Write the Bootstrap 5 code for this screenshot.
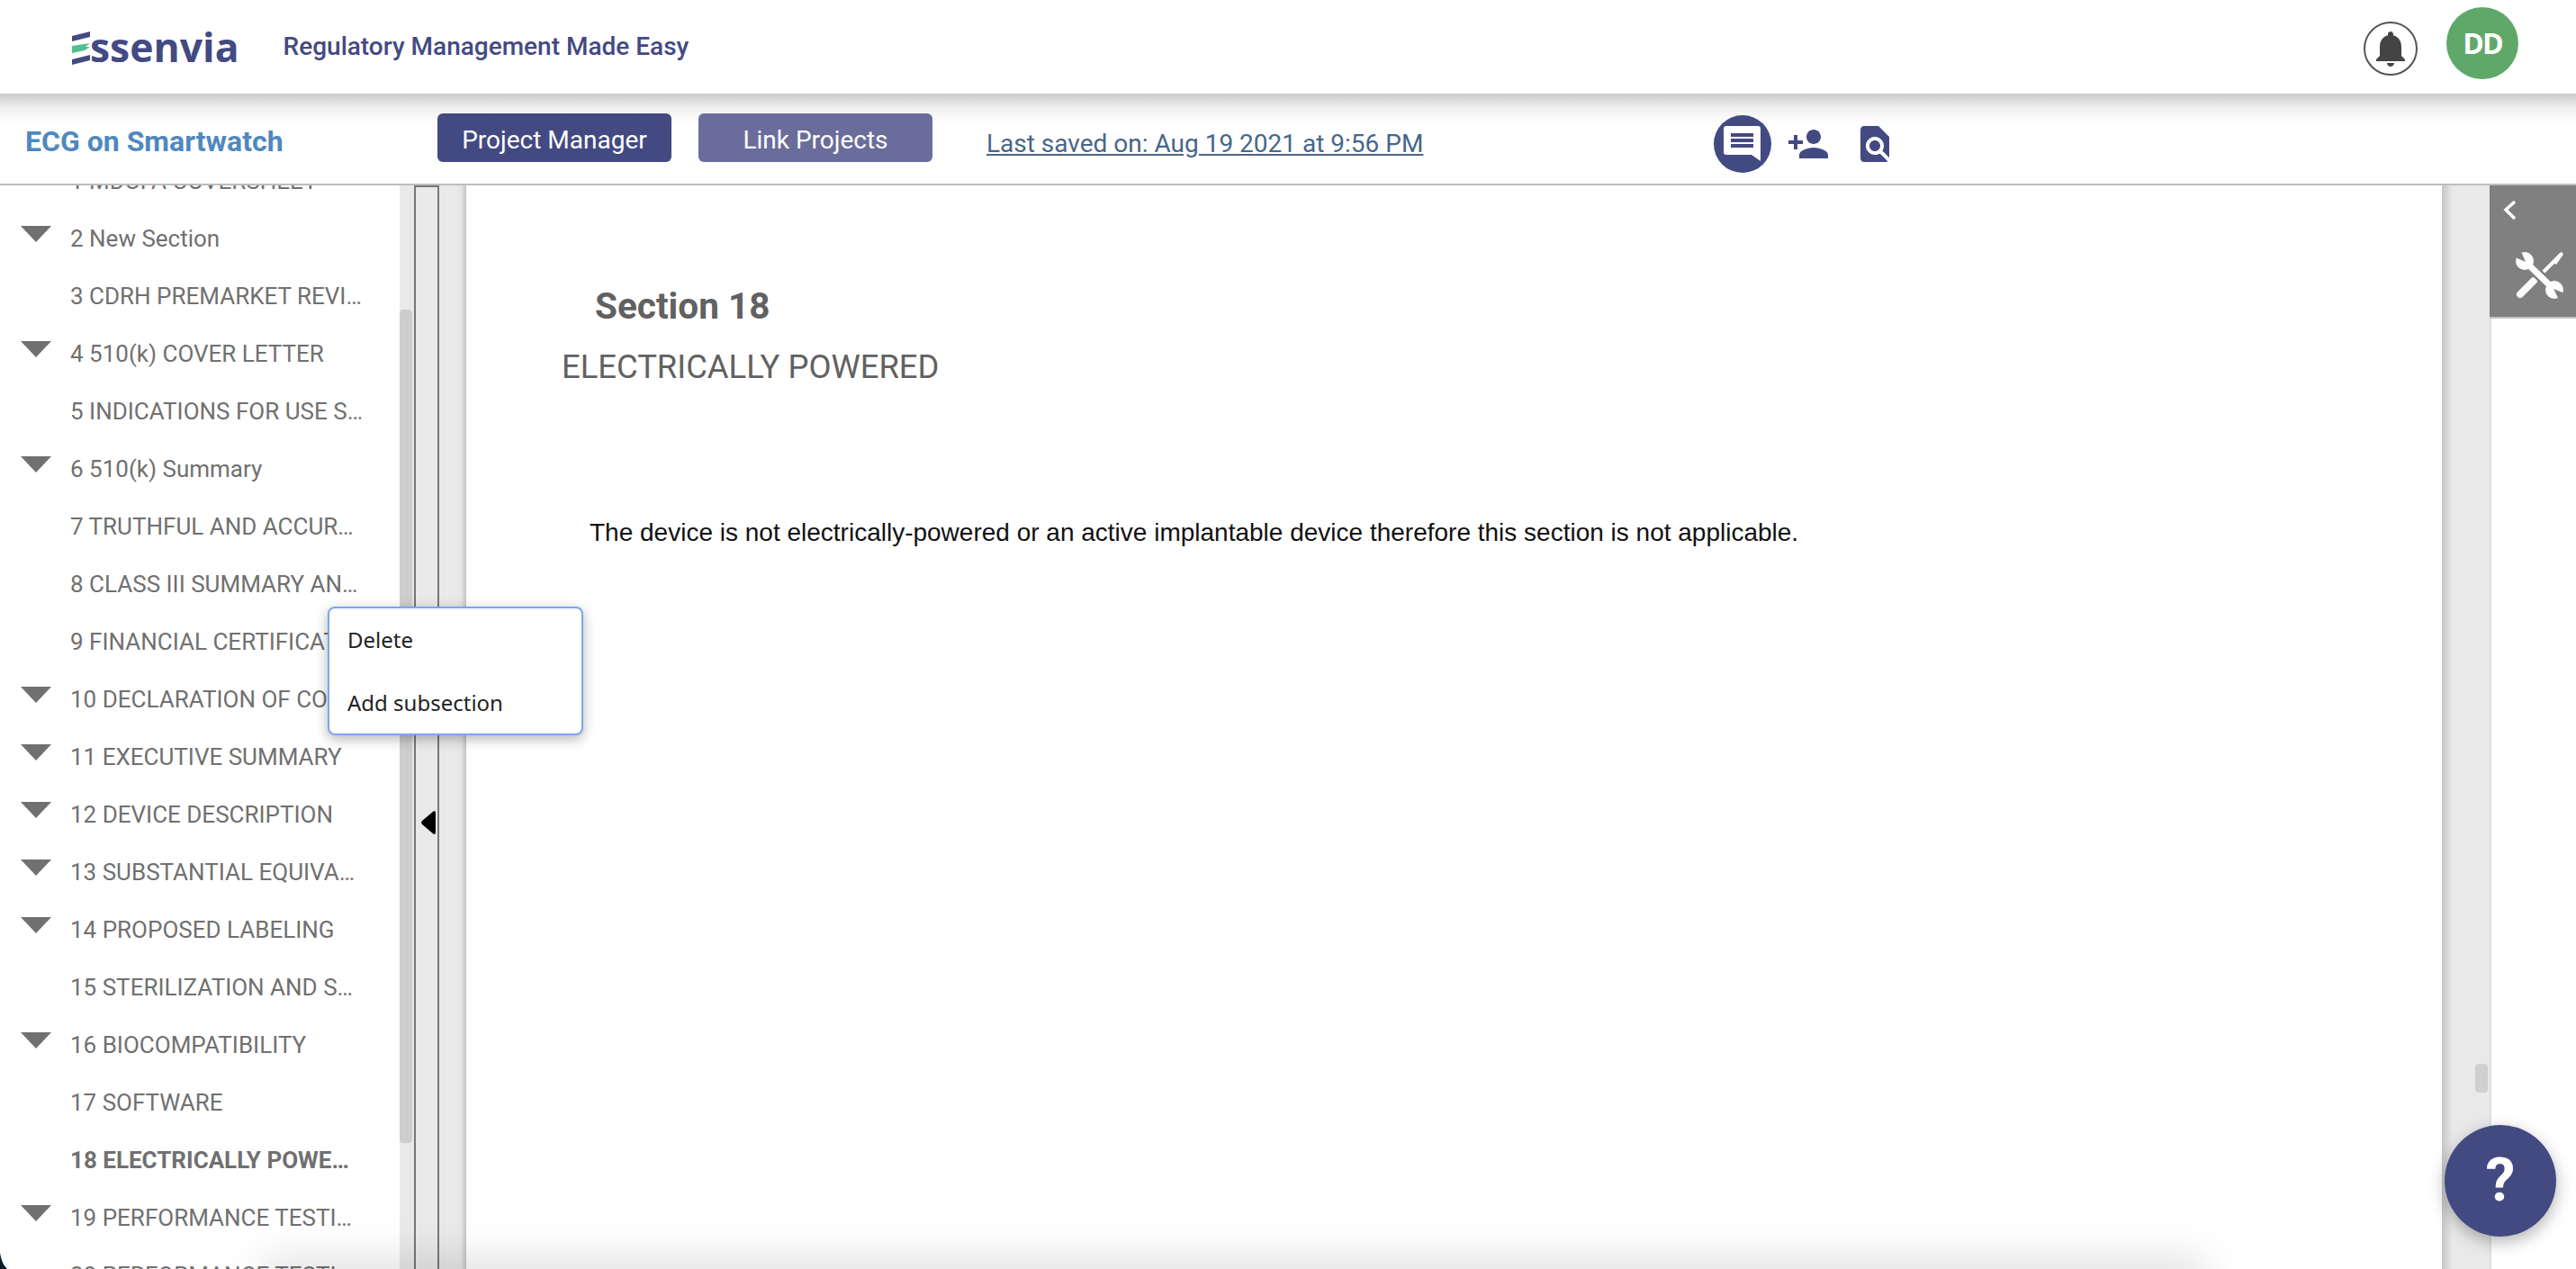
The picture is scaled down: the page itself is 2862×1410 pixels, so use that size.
<!DOCTYPE html>
<html lang="en">
<head>
  <meta charset="UTF-8">
  <meta name="viewport" content="width=device-width, initial-scale=1.0">
  <title>Essenvia</title>
  <link rel="stylesheet" href="https://cdn.jsdelivr.net/npm/bootstrap@5.3.0/dist/css/bootstrap.min.css">
  <style>
    html, body { height: 100%; overflow: hidden; }
    body { font-family: Roboto, sans-serif; background: #fff; }
    .app-shell { height: 1410px; }

    /* top header */
    .top-head { height: 104px; padding: 0 64px 0 80px; }
    .brand-mark { width: 21px; height: 37px; margin-top: 3px; }
    .brand-name { font-family: "Open Sans", sans-serif; font-weight: 700; font-size: 44.5px; line-height: 1; color: #434a82; margin-left: -1px; }
    .tag-line { font-weight: 500; font-size: 28px; color: #434a82; margin-left: 49px; }
    .bell-ring { width: 60px; height: 60px; border: 2px solid #555; margin-top: 4px; }
    .user-dot { width: 80px; height: 80px; background: #60a869; color: #fff; font-family: "Open Sans", sans-serif; font-weight: 700; font-size: 32px; letter-spacing: -2px; margin-left: 32px; margin-top: -8px; }

    /* project bar */
    .sub-bar { height: 102px; border-bottom: 2px solid #bdbdbd; background: linear-gradient(#cacaca, #f1f1f1 16px, #fff 34px); padding-left: 28px; }
    .proj-title { width: 458px; font-weight: 700; font-size: 32px; color: #4f88be; margin-top: 6px; }
    .bar-btn { width: 260px; height: 54px; padding: 0; border: 0; border-radius: 6px; color: #fff; font-size: 28px; line-height: 60px; margin-top: -2px; }
    .bar-btn.is-main, .bar-btn.is-main:hover { background: #434a82; color: #fff; }
    .bar-btn.is-soft, .bar-btn.is-soft:hover { background: #6a6d9b; color: #fff; margin-left: 30px; }
    .saved-link { font-size: 28px; color: #48668a; margin-left: 60px; width: 808px; margin-top: 12px; }
    .chat-dot { width: 64px; height: 64px; margin-top: 12px; }
    .bar-icon { width: 48px; height: 48px; fill: #434a82; margin-top: 12px; }

    /* section tree */
    .work-area { height: 1204px; }
    .tree-pane { width: 444px; overflow: hidden; }
    .tree-list { margin-top: -37px; }
    .tree-row { height: 64px; font-size: 26px; color: #707070; }
    .tree-row.is-active { font-weight: 700; }
    .caret-slot { width: 78px; padding-left: 23px; flex: none; margin-top: -10px; }
    .caret-slot svg { width: 34px; height: 18px; display: block; fill: #707070; }
    .tree-track { width: 16px; background: #e9e9e9; padding-top: 138px; }
    .tree-thumb { width: 14px; height: 926px; background: #cdcdcd; border-radius: 4px; }
    .split-box { width: 28px; background: #e9e9e9; border: 2px solid #777; border-bottom-width: 0; padding: 692px 0 0 6px; }
    .split-box svg { width: 16px; height: 28px; display: block; }
    .split-gap { width: 30px; background: linear-gradient(90deg, #e9e9e9 60%, #e6e6e6 80%, #c4c4c4); }

    /* document */
    .doc-page { padding: 111px 0 0 106px; color: #616161; }
    .doc-head { font-size: 40.5px; font-weight: 700; line-height: 47px; margin: 0 0 0 37px; }
    .doc-sub { font-size: 36.4px; font-weight: 400; line-height: 44px; margin: 22px 0 0; }
    .doc-text { font-family: "Liberation Sans", Arial, sans-serif; font-size: 28px; line-height: 40px; color: #111; margin: 142px 0 0 31px; }
    .doc-rail { width: 53px; background: linear-gradient(90deg, #c6c6c6, #e9e9e9 12px); padding: 976px 2px 0 37px; }
    .doc-thumb { height: 32px; background: #d0d0d0; border-radius: 4px; }
    .tool-pane { width: 96px; border-left: 2px solid #e0e0e0; }
    .tool-tab { height: 148px; margin-left: -2px; background: #808080; border-bottom: 2px solid #c4c4c4; padding: 16px 0 0 14px; }
    .tool-tab svg { display: block; }

    /* things that sit on top */
    .row-menu { left: 364px; top: 674px; width: 284px; height: 143px; background: #fff; border: 2px solid #7ba6ef; border-radius: 8px; box-shadow: 0 4px 14px rgba(0,0,0,.3); font-family: "Noto Sans", sans-serif; font-size: 24px; color: #222; padding: 0 20px; }
    .row-menu div { height: 70px; line-height: 70px; }
    .help-btn { right: 22px; top: 1250px; width: 124px; height: 124px; background: #434a82; color: #fff; border: 0; font-size: 66px; font-weight: 700; line-height: 1; box-shadow: 0 6px 18px rgba(0,0,0,.3); }
    .foot-shade { left: 300px; right: 420px; bottom: -16px; height: 16px; box-shadow: 0 0 46px 8px rgba(0,0,0,.16); }
    .win-corner { left: 0; bottom: 0; width: 8px; height: 18px; fill: #0d1b26; }
  </style>
</head>
<body>
  <div class="app-shell position-relative overflow-hidden">

    <header class="top-head d-flex align-items-center">
      <svg class="brand-mark" viewBox="0 0 21 37">
        <polygon points="0,5 20,0 20,6 0,11" fill="#434a82"/>
        <polygon points="0,16 20,13 15,17 20,17 14,21 0,24" fill="#4fc08f"/>
        <polygon points="0,31 20,26 20,32 0,37" fill="#434a82"/>
      </svg>
      <span class="brand-name">ssenvia</span>
      <span class="tag-line">Regulatory Management Made Easy</span>
      <div class="d-flex align-items-center ms-auto">
        <div class="bell-ring rounded-circle d-flex align-items-center justify-content-center">
          <svg width="48" height="48" viewBox="0 0 24 24" fill="#444"><path d="M12 22c1.1 0 2-.9 2-2h-4c0 1.1.89 2 2 2zm6-6v-5c0-3.07-1.64-5.64-4.5-6.32V4c0-.83-.67-1.5-1.5-1.5s-1.5.67-1.5 1.5v.68C7.63 5.36 6 7.92 6 11v5l-2 2v1h16v-1l-2-2z"/></svg>
        </div>
        <div class="user-dot rounded-circle d-flex align-items-center justify-content-center">DD</div>
      </div>
    </header>

    <div class="sub-bar d-flex align-items-center">
      <div class="proj-title">ECG on Smartwatch</div>
      <button class="btn bar-btn is-main" type="button">Project Manager</button>
      <button class="btn bar-btn is-soft" type="button">Link Projects</button>
      <a class="saved-link" href="#">Last saved on: Aug 19 2021 at 9:56 PM</a>
      <svg class="chat-dot" viewBox="0 0 64 64">
        <circle cx="32" cy="32" r="32" fill="#434a82"/>
        <path d="M14 12h35a3 3 0 0 1 3 3v36l-10-7H14a3 3 0 0 1-3-3V15a3 3 0 0 1 3-3z" fill="#fff"/>
        <path d="M19 20h25v4H19zM19 26h25v4H19zM19 32h25v4H19z" fill="#434a82"/>
      </svg>
      <svg class="bar-icon" style="margin-left:17px" viewBox="0 0 24 24"><path d="M15 12c2.21 0 4-1.79 4-4s-1.79-4-4-4-4 1.79-4 4 1.79 4 4 4zm-9-2V7H4v3H1v2h3v3h2v-3h3v-2H6zm9 4c-2.67 0-8 1.34-8 4v2h16v-2c0-2.66-5.33-4-8-4z"/></svg>
      <svg class="bar-icon" style="margin-left:26px" viewBox="0 0 24 24"><path d="M20 19.59V8l-6-6H6c-1.1 0-1.99.9-1.99 2L4 20c0 1.1.89 2 1.99 2H18c.45 0 .85-.15 1.19-.38l-4.43-4.43c-.8.52-1.74.81-2.76.81-2.76 0-5-2.24-5-5s2.24-5 5-5 5 2.24 5 5c0 1.02-.29 1.96-.81 2.76L20 19.59zM9 13c0 1.66 1.34 3 3 3s3-1.34 3-3-1.34-3-3-3-3 1.34-3 3z"/></svg>
    </div>

    <div class="work-area d-flex">
      <nav class="tree-pane">
        <ul class="tree-list list-unstyled mb-0" id="sectionTree"></ul>
      </nav>
      <div class="tree-track"><div class="tree-thumb"></div></div>
      <div class="split-box">
        <svg viewBox="0 0 16 28"><path d="M14 1a2 2 0 0 1 2 2v22a2 2 0 0 1-2 2L1 16a3 3 0 0 1 0-4z" fill="#000"/></svg>
      </div>
      <div class="split-gap"></div>
      <main class="doc-page flex-grow-1">
        <h2 class="doc-head">Section 18</h2>
        <h3 class="doc-sub">ELECTRICALLY POWERED</h3>
        <p class="doc-text">The device is not electrically-powered or an active implantable device therefore this section is not applicable.</p>
      </main>
      <div class="doc-rail"><div class="doc-thumb"></div></div>
      <aside class="tool-pane">
        <div class="tool-tab">
          <svg width="18" height="24" viewBox="0 0 18 24" fill="none" stroke="#fff" stroke-width="3.5"><path d="M14 2 4 11l10 10"/></svg>
          <svg width="54" height="52" viewBox="0 0 54 52" style="margin:34px 0 0 15px">
            <path d="M5 47 20 32" stroke="#fff" stroke-width="8" stroke-linecap="round"/>
            <path d="M29 24 42 11" stroke="#fff" stroke-width="4"/>
            <path d="M40 10 49 1a2 2 0 0 1 3 3l-7 10z" fill="#fff"/>
            <path d="M12 12 42 41" stroke="#808080" stroke-width="12"/>
            <path d="M12 12 42 41" stroke="#fff" stroke-width="7"/>
            <circle cx="10" cy="10" r="10" fill="#fff"/>
            <circle cx="43" cy="42" r="10" fill="#fff"/>
            <path d="M11 11 -3 5 5 -3z" fill="#808080"/>
            <path d="M42 41 57 47 49 55z" fill="#808080"/>
          </svg>
        </div>
      </aside>
    </div>

    <div class="row-menu position-absolute">
      <div>Delete</div>
      <div>Add subsection</div>
    </div>
    <div class="foot-shade position-absolute"></div>
    <button class="help-btn btn rounded-circle position-absolute p-0" type="button">?</button>
    <svg class="win-corner position-absolute" viewBox="0 0 8 18"><path d="M0 0C1 6 3 13 8 18H0z"/></svg>
  </div>

  <script src="https://cdn.jsdelivr.net/npm/bootstrap@5.3.0/dist/js/bootstrap.bundle.min.js"></script>
  <script>
    // [label, has children]
    const sections = [
      ["1 MDUFA COVERSHEET", false],
      ["2 New Section", true],
      ["3 CDRH PREMARKET REVI…", false],
      ["4 510(k) COVER LETTER", true],
      ["5 INDICATIONS FOR USE S…", false],
      ["6 510(k) Summary", true],
      ["7 TRUTHFUL AND ACCUR…", false],
      ["8 CLASS III SUMMARY AN…", false],
      ["9 FINANCIAL CERTIFICATI…", false],
      ["10 DECLARATION OF CON…", true],
      ["11 EXECUTIVE SUMMARY", true],
      ["12 DEVICE DESCRIPTION", true],
      ["13 SUBSTANTIAL EQUIVA…", true],
      ["14 PROPOSED LABELING", true],
      ["15 STERILIZATION AND S…", false],
      ["16 BIOCOMPATIBILITY", true],
      ["17 SOFTWARE", false],
      ["18 ELECTRICALLY POWE…", false],
      ["19 PERFORMANCE TESTI…", true],
      ["20 PERFORMANCE TESTI…", false]
    ];
    const caret = '<svg viewBox="0 0 34 18"><polygon points="0,0 34,0 17,18"/></svg>';
    document.getElementById("sectionTree").innerHTML = sections.map(([label, open]) => {
      const active = label.startsWith("18 ") ? " is-active" : "";
      return `<li class="tree-row d-flex align-items-center text-nowrap${active}"><span class="caret-slot">${open ? caret : ""}</span>${label}</li>`;
    }).join("");
  </script>
</body>
</html>
